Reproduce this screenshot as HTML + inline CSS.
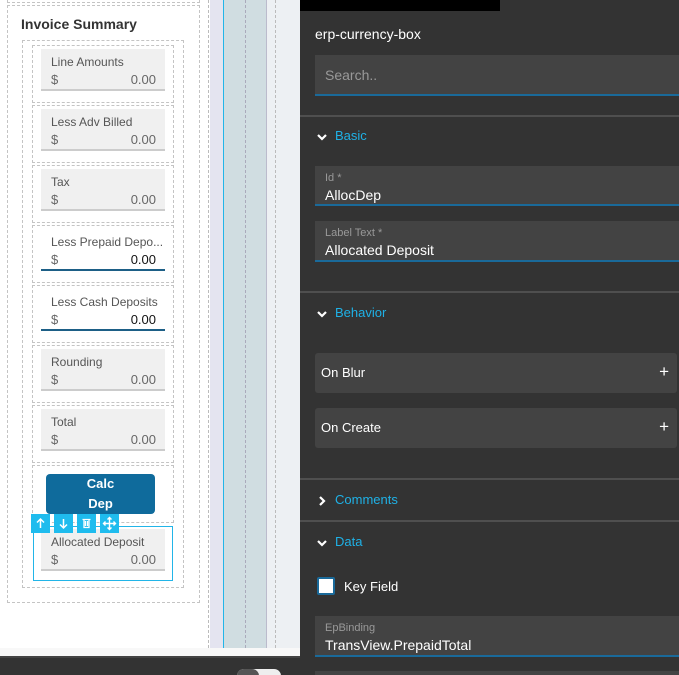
<!DOCTYPE html>
<html><head><style>
*{box-sizing:border-box;margin:0;padding:0}
html,body{width:679px;height:675px;overflow:hidden}
body{position:relative;font-family:"Liberation Sans",sans-serif;background:#fff}
.a{position:absolute}
.cell{position:absolute;left:32px;width:142px;height:58px;border:1px dashed #c4c4c4}
.fld{position:absolute;left:8px;top:3px;width:124px;height:42px;background:#f0f0f0;border-bottom:2px solid #ccc}
.fld .l{position:absolute;left:10px;top:6px;font-size:12px;color:#555}
.fld .s{position:absolute;left:10px;top:23px;font-size:13px;color:#666}
.fld .v{position:absolute;right:9px;top:23px;font-size:13px;color:#666}
.fld.w{background:#fff;border-bottom:2px solid #1d5f86}
.fld.w .v{color:#111}
.rp{color:#fff;font-size:13px}
.inp{position:absolute;left:315px;width:364px;background:#434343;border-bottom:2px solid #1a6a9a}
.inp .l{position:absolute;left:10px;top:6px;font-size:11px;color:#999}
.inp .v{position:absolute;left:10px;top:21px;font-size:14px;color:#fff}
.sep{position:absolute;left:300px;width:379px;height:2px;background:#4f4f4f}
.sec{position:absolute;left:316px;font-size:13px;color:#1fb1e6}
.sec svg{position:absolute;left:0;top:3px}
.sec span{margin-left:19px}
.ev{position:absolute;left:315px;width:362px;height:40px;background:#434343;border-radius:3px;color:#fff;font-size:13px;padding:12px 6px}
.ev span{position:absolute;right:8px;top:9px;font-size:17px}
</style></head><body>
<div class="a" style="left:208px;top:0;width:1px;height:648px;border-left:1px dashed #bbb"></div>
<div class="a" style="left:210px;top:0;width:13px;height:648px;background:#e4e4f0"></div>
<div class="a" style="left:223px;top:0;width:1px;height:648px;background:#22b5e8"></div>
<div class="a" style="left:224px;top:0;width:43px;height:648px;background:#d0dde1"></div>
<div class="a" style="left:245px;top:0;width:1px;height:648px;border-left:1px dashed #aab"></div>
<div class="a" style="left:266px;top:0;width:1px;height:648px;background:#bbc"></div>
<div class="a" style="left:267px;top:0;width:33px;height:648px;background:#edf0f3"></div>
<div class="a" style="left:275px;top:0;width:1px;height:648px;border-left:1px dashed #bbb"></div>
<div class="a" style="left:0;top:648px;width:300px;height:8px;background:#f8f8f8"></div>
<div class="a" style="left:0;top:656px;width:300px;height:19px;background:#333;border-top:2px solid #444"></div>
<div class="a" style="left:237px;top:669px;width:44px;height:14px;border-radius:7px;background:#eee"></div>
<div class="a" style="left:237px;top:669px;width:22px;height:14px;border-radius:7px;background:#555"></div>
<div class="a" style="left:7px;top:-5px;width:193px;height:8px;border:1px dashed #c4c4c4"></div>
<div class="a" style="left:7px;top:5px;width:193px;height:598px;border:1px dashed #c4c4c4"></div>
<div class="a" style="left:21px;top:16px;font-size:14px;font-weight:bold;color:#333">Invoice Summary</div>
<div class="a" style="left:22px;top:40px;width:162px;height:548px;border:1px dashed #c4c4c4"></div>
<div class="cell" style="top:45px"><div class="fld"><span class="l">Line Amounts</span><span class="s">$</span><span class="v">0.00</span></div></div>
<div class="cell" style="top:105px"><div class="fld"><span class="l">Less Adv Billed</span><span class="s">$</span><span class="v">0.00</span></div></div>
<div class="cell" style="top:165px"><div class="fld"><span class="l">Tax</span><span class="s">$</span><span class="v">0.00</span></div></div>
<div class="cell" style="top:225px"><div class="fld w"><span class="l">Less Prepaid Depo...</span><span class="s">$</span><span class="v">0.00</span></div></div>
<div class="cell" style="top:285px"><div class="fld w"><span class="l">Less Cash Deposits</span><span class="s">$</span><span class="v">0.00</span></div></div>
<div class="cell" style="top:345px"><div class="fld"><span class="l">Rounding</span><span class="s">$</span><span class="v">0.00</span></div></div>
<div class="cell" style="top:405px"><div class="fld"><span class="l">Total</span><span class="s">$</span><span class="v">0.00</span></div></div>
<div class="cell" style="top:465px"></div>
<div class="a" style="left:46px;top:474px;width:109px;height:40px;background:#0f6b9c;border-radius:4px;color:#fff;font-size:13px;font-weight:bold;text-align:center;line-height:20px">Calc<br>Dep</div>
<div class="a" style="left:33px;top:526px;width:140px;height:55px;border:1px solid #22b5e8">
 <div class="fld" style="left:7px;top:2px"><span class="l">Allocated Deposit</span><span class="s">$</span><span class="v">0.00</span></div>
</div>
<div class="a" style="left:31px;top:514px;width:19px;height:19px;background:#1fbcee"><svg width="19" height="19"><path d="M9.5 14V5M6 8.5l3.5-3.5 3.5 3.5" stroke="#fff" stroke-width="1.5" fill="none"/></svg></div>
<div class="a" style="left:54px;top:514px;width:19px;height:19px;background:#1fbcee"><svg width="19" height="19"><path d="M9.5 5v9M6 10.5l3.5 3.5 3.5-3.5" stroke="#fff" stroke-width="1.5" fill="none"/></svg></div>
<div class="a" style="left:77px;top:514px;width:19px;height:19px;background:#1fbcee"><svg width="19" height="19"><path d="M5.5 5.5h8M7 5.5v8h5v-8M8.5 7v5M10.5 7v5" stroke="#fff" stroke-width="1.3" fill="none"/></svg></div>
<div class="a" style="left:100px;top:514px;width:19px;height:19px;background:#1fbcee"><svg width="19" height="19"><path d="M9.5 3.5v12M3.5 9.5h12M7.5 5.5l2-2 2 2M7.5 13.5l2 2 2-2M5.5 7.5l-2 2 2 2M13.5 7.5l2 2-2 2" stroke="#fff" stroke-width="1.4" fill="none"/></svg></div>
<div class="a" style="left:300px;top:0;width:379px;height:675px;background:#333"></div>
<div class="a" style="left:300px;top:0;width:200px;height:11px;background:#000"></div>
<div class="a rp" style="left:315px;top:26px;font-size:14px">erp-currency-box</div>
<div class="inp" style="top:55px;height:41px"><span class="v" style="top:12px;color:#999">Search..</span></div>
<div class="sep" style="top:115px"></div>
<div class="sec" style="top:128px"><svg width="12" height="12"><path d="M2 4l4 4 4-4" stroke="#fff" stroke-width="2.2" fill="none"/></svg><span>Basic</span></div>
<div class="inp" style="top:166px;height:40px"><span class="l">Id *</span><span class="v">AllocDep</span></div>
<div class="inp" style="top:221px;height:41px"><span class="l">Label Text *</span><span class="v">Allocated Deposit</span></div>
<div class="sep" style="top:291px"></div>
<div class="sec" style="top:305px"><svg width="12" height="12"><path d="M2 4l4 4 4-4" stroke="#fff" stroke-width="2.2" fill="none"/></svg><span>Behavior</span></div>
<div class="ev" style="top:353px">On Blur<span>+</span></div>
<div class="ev" style="top:408px">On Create<span>+</span></div>
<div class="sep" style="top:478px"></div>
<div class="sec" style="top:492px"><svg width="12" height="12"><path d="M4 2l4 4-4 4" stroke="#fff" stroke-width="2.2" fill="none"/></svg><span>Comments</span></div>
<div class="sep" style="top:520px"></div>
<div class="sec" style="top:534px"><svg width="12" height="12"><path d="M2 4l4 4 4-4" stroke="#fff" stroke-width="2.2" fill="none"/></svg><span>Data</span></div>
<div class="a" style="left:317px;top:577px;width:18px;height:18px;background:#fff;border:2px solid #1a6a9a;border-radius:2px"></div>
<div class="a rp" style="left:344px;top:579px">Key Field</div>
<div class="inp" style="top:616px;height:41px"><span class="l">EpBinding</span><span class="v">TransView.PrepaidTotal</span></div>
<div class="a" style="left:315px;top:671px;width:364px;height:4px;background:#434343"></div>
</body></html>
